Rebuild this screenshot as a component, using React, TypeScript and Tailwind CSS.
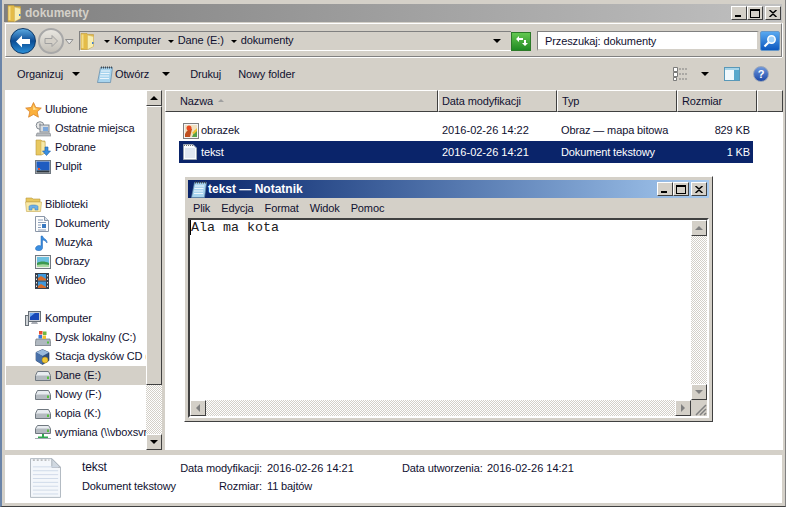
import type { ReactNode } from 'react';

const bevel = 'border border-t-white border-l-white border-r-[#404040] border-b-[#404040]';
const dither = 'bg-[repeating-conic-gradient(#d4d0c8_0_25%,#ffffff_0_50%)] bg-[length:2px_2px]';

const FolderIcon = () => (
  <svg width="16" height="17" viewBox="0 0 16 17">
    <path d="M1 .5h6l.5 1h6V13l-6 3.500H1z" fill="#e4bc48" stroke="#c09a3c" strokeWidth="0.6" />
    <path d="M1.500 1.500h2V15h-2z" fill="#f4dc88" />
    <path d="M7.500 2l6 1.500v10l-6 3z" fill="#f8eeb0" stroke="#d0b060" strokeWidth="0.5" />
    <rect x="12" y="9" width="1.500" height="2" fill="#3f7fd0" />
  </svg>
);

const StarIcon = () => (
  <svg width="17" height="16" viewBox="0 0 17 16">
    <path d="M8.5.5l2.3 5 5.5.6-4.100 3.700 1.200 5.400-4.900-2.800-4.900 2.800 1.200-5.400L.7 6.100l5.500-.6z" fill="#fbb03c" stroke="#d8842c" strokeWidth="0.8" />
    <path d="M8.500 3l1.400 3.600 3.300.4-5 1z" fill="#ffe9a0" />
  </svg>
);

const RecentIcon = () => (
  <svg width="16" height="16" viewBox="0 0 16 16">
    <circle cx="5" cy="4.500" r="3.800" fill="#e8e8e8" stroke="#808890" />
    <path d="M5 2.500v2h2" stroke="#505860" fill="none" strokeWidth="0.8" />
    <rect x="5" y="4" width="9" height="7" fill="#d8dce0" stroke="#808890" />
    <rect x="8" y="6" width="5" height="4" fill="#7ca8dc" />
    <path d="M2 12h13l1 3H1z" fill="#b8bcc0" stroke="#80848c" strokeWidth="0.6" />
  </svg>
);

const DownloadIcon = () => (
  <svg width="16" height="17" viewBox="0 0 16 17">
    <path d="M1 1h5l1 1h3v12l-4 2H1z" fill="#e8c860" stroke="#b8983c" strokeWidth="0.6" />
    <path d="M6 2l4 1v11l-4 2z" fill="#f6e9a8" stroke="#c8a850" strokeWidth="0.5" />
    <path d="M10 8h3v4h2.500L11.500 16.500 7.500 12H10z" fill="#3a8ee0" stroke="#1c5fa8" strokeWidth="0.6" />
  </svg>
);

const DesktopIcon = () => (
  <svg width="16" height="14" viewBox="0 0 16 14">
    <rect x="0.500" y="0.500" width="15" height="13" fill="#c8ccd0" stroke="#707880" />
    <rect x="1.500" y="1.500" width="13" height="9" fill="#1f5cc0" />
    <path d="M1.500 7l6 3.500h-6z" fill="#58a0e8" />
    <rect x="1.500" y="10.500" width="13" height="2" fill="#303840" />
    <rect x="3" y="8" width="2" height="2" fill="#e05030" />
  </svg>
);

const LibraryIcon = () => (
  <svg width="17" height="15" viewBox="0 0 17 15">
    <path d="M1 1h6l1 1h7v3H1z" fill="#e8c860" stroke="#b8983c" strokeWidth="0.6" />
    <path d="M.500 5h16l-1 9.500H1.500z" fill="#f8e9a8" stroke="#c8a850" strokeWidth="0.6" />
    <path d="M4 13V9.500c0-2 9-2 9 0V13h-3v-2H7v2z" fill="#6cb0e8" stroke="#3878b8" strokeWidth="0.5" />
  </svg>
);

const DocIcon = () => (
  <svg width="14" height="16" viewBox="0 0 14 16">
    <path d="M.500.500h9l4 4v11H.500z" fill="#fdfdfd" stroke="#8a96a8" />
    <path d="M9.500.500v4h4" fill="#d8e0e8" stroke="#8a96a8" />
    <path d="M3 4h5M3 6.500h8M3 9h3M3 11.500h3M3 14h8" stroke="#7088a8" strokeWidth="0.8" />
    <rect x="7" y="8" width="4" height="4" fill="#3878c0" />
  </svg>
);

const MusicIcon = () => (
  <svg width="14" height="16" viewBox="0 0 14 16">
    <path d="M6 1h1.500c.5 3 5 3 4.500 7-1-2-3-3-4.500-3v8c0 2-2.500 3-5 2.500S0 13 1.500 11.500 5 10.500 6 11z" fill="#3a8ee0" stroke="#1c60b0" strokeWidth="0.5" />
  </svg>
);

const PictureIcon = () => (
  <svg width="16" height="14" viewBox="0 0 16 14">
    <rect x="0.500" y="0.500" width="15" height="13" fill="#f0f0f0" stroke="#707880" />
    <rect x="2" y="2" width="12" height="6" fill="#6cc0e0" />
    <path d="M2 8c3-2 8-2 12 0v4H2z" fill="#3c9850" />
    <path d="M2 10c4-1 8-1 12 0v2H2z" fill="#a8d8a0" />
  </svg>
);

const VideoIcon = () => (
  <svg width="14" height="16" viewBox="0 0 14 16">
    <rect width="14" height="16" fill="#38404c" />
    <rect x="3" y="1" width="8" height="6.500" fill="#3e98dc" />
    <rect x="3" y="8.500" width="8" height="6.500" fill="#3e98dc" />
    <path d="M3 5l3-2 5 3v1.500H3zM3 13l3-2 5 3v1H3z" fill="#d86c28" />
    <path d="M1 2h1v1.500H1zM1 5.500h1V7H1zM1 9h1v1.500H1zM1 12.500h1V14H1zM12 2h1v1.500h-1zM12 5.500h1V7h-1zM12 9h1v1.500h-1zM12 12.500h1V14h-1z" fill="#e8e8e8" />
  </svg>
);

const ComputerIcon = () => (
  <svg width="16" height="15" viewBox="0 0 16 15">
    <rect x="0.500" y="4.500" width="3" height="10" fill="#d0d4d8" stroke="#687078" />
    <rect x="3.500" y="0.500" width="12" height="10" fill="#c8ccd4" stroke="#687078" />
    <rect x="5" y="2" width="9" height="7" fill="#1848b8" />
    <path d="M5 2h5l-5 4z" fill="#70a8f0" />
    <path d="M7 11h5l1 2H6z" fill="#a8acb4" />
  </svg>
);

const SystemDiskIcon = () => (
  <svg width="16" height="16" viewBox="0 0 16 16">
    <path d="M1 9h14l1 6.500H0z" fill="#b0b8c0" stroke="#687078" strokeWidth="0.7" />
    <rect x="12" y="11.500" width="2" height="2" fill="#50c040" />
    <rect x="4" y="1" width="3.500" height="3.500" fill="#e85030" />
    <rect x="8" y="1.500" width="3.500" height="3.500" fill="#70b840" />
    <rect x="3.500" y="5" width="3.500" height="3.500" fill="#3878d8" />
    <rect x="7.500" y="5.500" width="3.500" height="3.500" fill="#f0c030" />
  </svg>
);

const VboxIcon = () => (
  <svg width="15" height="16" viewBox="0 0 15 16">
    <path d="M7.500.500l6.500 3v8l-6.500 4-6.500-4v-8z" fill="#305080" stroke="#183058" strokeWidth="0.6" />
    <path d="M7.500.500l6.500 3-6.500 3.500L1 3.500z" fill="#98b8dc" />
    <path d="M7.500 7v8.500L1 11.500v-8z" fill="#4870a8" />
    <circle cx="10" cy="11" r="3" fill="#f0c838" stroke="#a88018" strokeWidth="0.5" />
  </svg>
);

const DriveIcon = () => (
  <svg width="16" height="10" viewBox="0 0 16 10">
    <path d="M2.500.500h11l2 4v5H.500v-5z" fill="#e8ecf0" stroke="#707880" />
    <rect x="1" y="4.500" width="14" height="4.500" fill="#b4bac0" />
    <rect x="12" y="5.500" width="2" height="2.500" fill="#58c040" />
  </svg>
);

const NetDriveIcon = () => (
  <svg width="16" height="15" viewBox="0 0 16 15">
    <path d="M2.500.500h11l2 3v5H.500v-5z" fill="#e8ecf0" stroke="#707880" />
    <rect x="1" y="3.500" width="14" height="4.500" fill="#b4bac0" />
    <rect x="12" y="4.500" width="2" height="2.500" fill="#58c040" />
    <path d="M7 9h2v2.500h-2zM3 11.500h10V14H3z" fill="#30a850" />
    <path d="M0 13h16v1H0z" fill="#a0a8b0" />
  </svg>
);

const BitmapIcon = () => (
  <svg width="16" height="16" viewBox="0 0 16 16">
    <rect x="0.500" y="0.500" width="15" height="15" fill="#f4f4f4" stroke="#808080" />
    <rect x="2" y="2" width="12" height="12" fill="#f0e0c0" />
    <path d="M2 11c2-4 5-6 7-5l-2 8H2z" fill="#c05020" />
    <circle cx="6" cy="5" r="2.500" fill="#e84820" />
    <path d="M9 14l3-7 2 1v6z" fill="#58a048" />
    <path d="M9 10l5-5v3l-3 3z" fill="#f0c030" />
  </svg>
);

const TextFileIcon = () => (
  <svg width="14" height="16" viewBox="0 0 14 16">
    <path d="M.500.500h9.500l3.500 3.500v11.500H.500z" fill="#fafcff" stroke="#9aa4b0" />
    <path d="M1 1.500h9" stroke="#707070" strokeDasharray="1 1" />
    <path d="M2 5h10M2 7h10M2 9h10M2 11h10M2 13h10" stroke="#c4d0e0" />
  </svg>
);

const NotepadIcon = () => (
  <svg width="16" height="17" viewBox="0 0 16 17">
    <path d="M3.500 1.500h12l-2 15H.500z" fill="#a8d4ee" stroke="#6088a8" strokeWidth="0.7" />
    <path d="M4 1.500h11" stroke="#404850" strokeDasharray="1 1" strokeWidth="2" />
    <path d="M4 5h9M3.500 7.500h9M3 10h9M3 12.500h9" stroke="#ffffff" strokeWidth="0.8" />
  </svg>
);

const Arrow = ({ className = '' }: { className?: string }) => (
  <span className={`inline-block w-0 h-0 border-x-[4px] border-x-transparent border-t-[4px] border-t-black ${className}`} />
);

const SmallArrow = ({ className = '' }: { className?: string }) => (
  <span className={`inline-block w-0 h-0 border-x-[3px] border-x-transparent border-t-[3px] border-t-black ${className}`} />
);

const WinButtons = () => (
  <div className="flex items-center">
    <span className={`${bevel} w-[16px] h-[14px] bg-[#d4d0c8] flex items-end justify-start pl-[3px] pb-[2px]`}>
      <span className="w-[6px] h-[2px] bg-black" />
    </span>
    <span className={`${bevel} w-[16px] h-[14px] bg-[#d4d0c8] flex items-center justify-center`}>
      <span className="w-[10px] h-[9px] border border-t-2 border-black" />
    </span>
    <span className={`${bevel} w-[16px] h-[14px] bg-[#d4d0c8] ml-[2px] flex items-center justify-center`}>
      <svg width="8" height="7" viewBox="0 0 8 7">
        <path d="M.500 0l3.500 3L7.500 0M.500 7L4 4l3.500 3" stroke="#000" strokeWidth="1.500" fill="none" />
      </svg>
    </span>
  </div>
);

const ScrollBtn = ({ children, className = '' }: { children: ReactNode; className?: string }) => (
  <div className={`${bevel} w-[16px] h-[16px] bg-[#d4d0c8] shrink-0 flex items-center justify-center ${className}`}>{children}</div>
);

type NavItem = { icon: ReactNode; label: string; head?: boolean; selected?: boolean };

const navGroups: NavItem[][] = [
  [
    { icon: <StarIcon />, label: 'Ulubione', head: true },
    { icon: <RecentIcon />, label: 'Ostatnie miejsca' },
    { icon: <DownloadIcon />, label: 'Pobrane' },
    { icon: <DesktopIcon />, label: 'Pulpit' },
  ],
  [
    { icon: <LibraryIcon />, label: 'Biblioteki', head: true },
    { icon: <DocIcon />, label: 'Dokumenty' },
    { icon: <MusicIcon />, label: 'Muzyka' },
    { icon: <PictureIcon />, label: 'Obrazy' },
    { icon: <VideoIcon />, label: 'Wideo' },
  ],
  [
    { icon: <ComputerIcon />, label: 'Komputer', head: true },
    { icon: <SystemDiskIcon />, label: 'Dysk lokalny (C:)' },
    { icon: <VboxIcon />, label: 'Stacja dysków CD (D:)' },
    { icon: <DriveIcon />, label: 'Dane (E:)', selected: true },
    { icon: <DriveIcon />, label: 'Nowy (F:)' },
    { icon: <DriveIcon />, label: 'kopia (K:)' },
    { icon: <NetDriveIcon />, label: 'wymiana (\\\\vboxsvr)' },
  ],
];

const NavRow = ({ item }: { item: NavItem }) => (
  <div className={`h-[19px] flex items-center whitespace-nowrap overflow-hidden ${item.selected ? 'bg-[#d4d0c8] ml-[1px] pl-[29px]' : item.head ? 'pl-[20px]' : 'pl-[30px]'}`}>
    <span className="w-[20px] shrink-0 flex items-center justify-start">{item.icon}</span>
    {item.label}
  </div>
);

const columns = [
  { label: 'Nazwa', width: 'w-[273px]', pad: 'pl-[14px]' },
  { label: 'Data modyfikacji', width: 'w-[119px]', pad: 'pl-[3px]' },
  { label: 'Typ', width: 'w-[120px]', pad: 'pl-[4px]' },
  { label: 'Rozmiar', width: 'w-[80px]', pad: 'pl-[4px]' },
  { label: '', width: 'w-[26px]', pad: '' },
];

const files = [
  { icon: <BitmapIcon />, name: 'obrazek', date: '2016-02-26 14:22', type: 'Obraz — mapa bitowa', size: '829 KB' },
  { icon: <TextFileIcon />, name: 'tekst', date: '2016-02-26 14:21', type: 'Dokument tekstowy', size: '1 KB', selected: true },
];

export default function App() {
  return (
    <div className="relative w-[786px] h-[507px] overflow-hidden bg-[#d4d0c8] text-[11px] leading-none tracking-[-0.12px] text-[#101030] border-b border-b-[#404040] border-r border-r-[#808080] border-l-2 border-l-[#6a84a8] font-['Liberation_Sans',sans-serif] flex flex-col pt-[4px]">
      {/* title bar */}
      <div className="h-[18px] mx-[2px] mr-[3px] bg-gradient-to-r from-[#808080] to-[#c0c0c0] flex items-center justify-between pl-[3px] pr-[1px]">
        <div className="flex items-center gap-[2px] font-bold text-[12px] tracking-normal text-[#d4d0c8]">
          <FolderIcon />
          dokumenty
        </div>
        <WinButtons />
      </div>

      {/* address bar */}
      <div className="h-[34px] mx-[3px] mt-[1px] pt-[2px] border border-t-white border-l-white border-r-[#808080] border-b-[#808080] shadow-[0_1px_0_#ffffff,1px_0_0_#ffffff] flex items-center">
        <div className="flex items-center pl-[4px]">
          <span className="w-[26px] h-[26px] rounded-full bg-gradient-to-b from-[#5aa8e0] via-[#0a4c94] to-[#2c90d8] border border-[#0c3868] flex items-center justify-center">
            <svg width="16" height="13" viewBox="0 0 16 13"><path d="M7 .5L1 6.500l6 6V9h8V4H7z" fill="#fff" /></svg>
          </span>
          <span className="w-[26px] h-[26px] ml-[2px] rounded-full bg-gradient-to-b from-[#e8e6e0] to-[#c4c0b8] border-2 border-[#a8a8a8] flex items-center justify-center">
            <svg width="14" height="12" viewBox="0 0 14 12"><path d="M8 .5l5.500 5.500L8 11.500V8.500H1v-5h7z" fill="#d4d0c8" stroke="#a0a0a0" /></svg>
          </span>
          <svg width="9" height="6" viewBox="0 0 9 6" className="ml-[1px] mt-[1px]"><path d="M.5.5h7.500L4.300 5z" fill="#e8e8e8" stroke="#909090" /></svg>
        </div>
        <div className="w-[432px] h-[20px] ml-[5px] border-t border-t-[#808080] border-l border-l-[#808080] border-b border-b-white flex items-center">
          <FolderIcon />
          <SmallArrow className="ml-[8px]" />
          <span className="ml-[4px] -mt-[1px]">Komputer</span>
          <SmallArrow className="ml-[7px]" />
          <span className="ml-[4px] -mt-[1px]">Dane (E:)</span>
          <SmallArrow className="ml-[7px]" />
          <span className="ml-[4px] -mt-[1px]">dokumenty</span>
          <Arrow className="ml-auto mr-[10px]" />
        </div>
        <span className="w-[20px] h-[19px] border border-[#2c7a28] bg-gradient-to-b from-[#62c850] to-[#1e8a22] flex items-center justify-center">
          <svg width="13" height="11" viewBox="0 0 13 11"><path d="M1 3l3-3v2h4v2H4v2zM9 4h2v3h2l-3 3-3-3h2z" fill="#fff" /></svg>
        </span>
        <div className="w-[222px] h-[20px] ml-[6px] pt-[1px] bg-white border-t border-l border-t-[#808080] border-l-[#808080] border-b-2 border-r-2 border-b-[#d4d0c8] border-r-[#d4d0c8] flex items-center pl-[7px]">
          Przeszukaj: dokumenty
        </div>
        <span className="w-[20px] h-[20px] ml-[1px] border border-[#6898c8] rounded-[2px] bg-gradient-to-b from-[#58a8f0] to-[#0a58c0] flex items-center justify-center">
          <svg width="14" height="14" viewBox="0 0 14 14"><circle cx="8.500" cy="5.500" r="3.700" fill="#a0d0f8" stroke="#fff" strokeWidth="1.500" /><path d="M5.500 8.500L1.500 12.500" stroke="#fff" strokeWidth="2.200" /></svg>
        </span>
      </div>

      {/* toolbar */}
      <div className="h-[32px] mt-[1px] flex items-center pl-[15px] pr-[16px]">
        <span>Organizuj</span>
        <Arrow className="ml-[9px]" />
        <span className="ml-[17px]"><NotepadIcon /></span>
        <span className="ml-[2px]">Otwórz</span>
        <Arrow className="ml-[13px]" />
        <span className="ml-[20px]">Drukuj</span>
        <span className="ml-[17px]">Nowy folder</span>
        <span className="ml-auto flex items-center">
          <svg width="16" height="14" viewBox="0 0 16 14">
            <path d="M.5.500h4v4h-4zM.5 5.500h4v4h-4zM.5 10.500h3v3h-3z" fill="#fff" stroke="#606060" strokeWidth="0.8" />
            <path d="M6 2h9M6 7h9M6 12h9" stroke="#808080" strokeDasharray="2 1" />
          </svg>
          <Arrow className="ml-[12px]" />
          <svg width="16" height="14" viewBox="0 0 16 14" className="ml-[15px]">
            <rect x="0.500" y="0.500" width="15" height="13" fill="#f0f8fc" stroke="#5898b8" />
            <rect x="10" y="1" width="5" height="12" fill="#58a8cc" />
            <rect x="1" y="1" width="14" height="2" fill="#a8d4e8" />
          </svg>
          <span className="ml-[13px] w-[16px] h-[16px] rounded-full bg-gradient-to-b from-[#7098dc] to-[#1c48a8] border border-[#98a4b8] text-white font-bold text-[11px] flex items-center justify-center">?</span>
        </span>
      </div>

      {/* panes */}
      <div className="h-[360px] flex">
        <div className="w-[141px] ml-[3px] bg-white pt-[10px] flex flex-col gap-[19px] overflow-hidden">
          {navGroups.map((group) => (
            <div key={group[0].label}>
              {group.map((item) => (
                <NavRow key={item.label} item={item} />
              ))}
            </div>
          ))}
        </div>
        <div className="w-[16px] flex flex-col">
          <ScrollBtn><Arrow className="rotate-180" /></ScrollBtn>
          <div className={`${bevel} h-[279px] bg-[#d4d0c8]`} />
          <div className={`flex-1 ${dither}`} />
          <ScrollBtn><Arrow /></ScrollBtn>
        </div>
        <div className="relative ml-[3px] w-[618px] bg-white">
          <div className="flex h-[22px]">
            {columns.map((c) => (
              <div key={c.label} className={`${c.width} ${c.pad} pt-[1px] shrink-0 ${bevel} bg-[#d4d0c8] flex items-center`}>
                {c.label}
                {c.label === 'Nazwa' && <span className="ml-[5px] -mt-[3px] w-0 h-0 border-x-[3px] border-x-transparent border-b-[3px] border-b-[#a0a0a0]" />}
              </div>
            ))}
          </div>
          <div className="pt-[8px] pl-[14px] w-[588px]">
            {files.map((f) => (
              <div key={f.name} className={`flex items-center ${f.selected ? 'h-[22px] bg-[#0a246a] text-white' : 'h-[21px]'}`}>
                <span className="w-[22px] pl-[4px] shrink-0">{f.icon}</span>
                <span className="w-[241px]">{f.name}</span>
                <span className="w-[119px] tracking-normal">{f.date}</span>
                <span className="w-[130px] whitespace-nowrap">{f.type}</span>
                <span className="w-[59px] text-right">{f.size}</span>
              </div>
            ))}
          </div>

          {/* notepad window */}
          <div className="absolute left-[19px] top-[86px] w-[529px] h-[246px] bg-[#d4d0c8] border border-t-white border-l-white border-r-[#404040] border-b-[#404040] p-[3px] flex flex-col">
            <div className="h-[18px] bg-gradient-to-r from-[#0a246a] to-[#a6caf0] flex items-center justify-between pl-[3px] pr-[2px]">
              <div className="flex items-center gap-[1px] font-bold text-[12px] tracking-normal text-white"><NotepadIcon />tekst — Notatnik</div>
              <WinButtons />
            </div>
            <div className="h-[20px] flex items-center gap-[11px] pl-[5px]">
              <span>Plik</span><span>Edycja</span><span>Format</span><span>Widok</span><span>Pomoc</span>
            </div>
            <div className="flex-1 flex flex-col border-2 border-t-[#404040] border-l-[#404040] border-r-white border-b-white min-h-0">
              <div className="flex-1 flex min-h-0">
                <div className="flex-1 bg-white pt-[1px] font-['Liberation_Mono',monospace] text-[13.33px] leading-[14px] tracking-normal text-[#202020]">
                  <span className="border-l border-l-black">Ala ma kota</span>
                </div>
                <div className="w-[16px] flex flex-col">
                  <ScrollBtn><Arrow className="rotate-180 !border-t-[#808080]" /></ScrollBtn>
                  <div className={`flex-1 ${dither}`} />
                  <ScrollBtn><Arrow className="!border-t-[#808080]" /></ScrollBtn>
                </div>
              </div>
              <div className="h-[16px] flex">
                <ScrollBtn><Arrow className="rotate-90 !border-t-[#808080]" /></ScrollBtn>
                <div className={`flex-1 ${dither}`} />
                <ScrollBtn><Arrow className="-rotate-90 !border-t-[#808080]" /></ScrollBtn>
                <div className="w-[16px] flex items-end justify-end">
                  <svg width="12" height="12" viewBox="0 0 12 12"><path d="M11 1L1 11M11 5l-6 6M11 9l-2 2" stroke="#808080" strokeWidth="1.500" /></svg>
                </div>
              </div>
            </div>
          </div>
        </div>
      </div>

      {/* details pane */}
      <div className="h-[48px] mt-[5px] mx-[3px] bg-white flex items-start">
        <svg width="31" height="40" viewBox="0 0 32 41" className="ml-[25px] mt-[3px] shrink-0">
          <path d="M.5.5h22l9 9v31H.5z" fill="#f4f7fb" stroke="#b0b8c0" />
          <path d="M22.500.5v9h9z" fill="#d0d8e0" stroke="#a8b0b8" />
          <path d="M3 2h17" stroke="#909090" strokeDasharray="2 2" />
          <path d="M3 9h26M3 13h26M3 17h26M3 21h26M3 25h26M3 29h26M3 33h26M3 37h26" stroke="#d0dae8" />
        </svg>
        <div className="ml-[21px] w-[97px] mt-[6px] flex flex-col gap-[8px] whitespace-nowrap">
          <span className="text-[12px]">tekst</span>
          <span>Dokument tekstowy</span>
        </div>
        <div className="grid grid-cols-[83px_auto] gap-x-[5px] gap-y-[7px] mt-[8px] w-[223px] justify-start">
          <span className="text-right">Data modyfikacji:</span><span className="tracking-normal">2016-02-26 14:21</span>
          <span className="text-right">Rozmiar:</span><span>11 bajtów</span>
        </div>
        <div className="flex mt-[8px]">
          <span className="w-[85px]">Data utworzenia:</span><span className="tracking-normal">2016-02-26 14:21</span>
        </div>
      </div>
    </div>
  );
}
